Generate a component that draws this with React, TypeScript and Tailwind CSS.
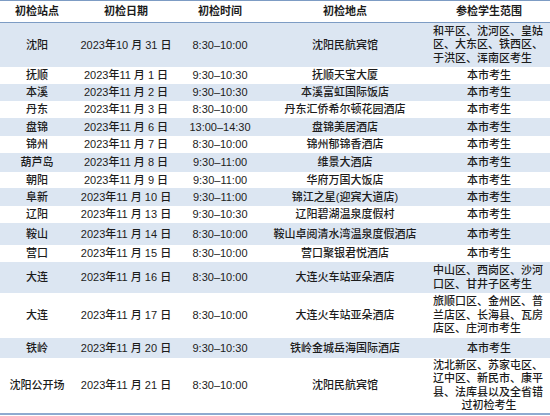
import React from "react";

interface Row {
  site: string;
  date: string;
  time: string;
  place: string;
  scope: string[];
  height: string;
  shaded: boolean;
  lastCentered?: boolean;
}

const rows: Row[] = [
  { site: "沈阳", date: "2023年10 月 31 日", time: "8:30–10:00", place: "沈阳民航宾馆", scope: ["和平区、沈河区、皇姑", "区、大东区、铁西区、", "于洪区、浑南区考生"], height: "h-[44px]", shaded: true },
  { site: "抚顺", date: "2023年11 月 1 日", time: "9:30–10:30", place: "抚顺天宝大厦", scope: ["本市考生"], height: "h-[17px]", shaded: false },
  { site: "本溪", date: "2023年11 月 2 日", time: "9:30–10:30", place: "本溪富虹国际饭店", scope: ["本市考生"], height: "h-[17px]", shaded: true },
  { site: "丹东", date: "2023年11 月 3 日", time: "8:30–10:00", place: "丹东汇侨希尔顿花园酒店", scope: ["本市考生"], height: "h-[17px]", shaded: false },
  { site: "盘锦", date: "2023年11 月 6 日", time: "13:00–14:30", place: "盘锦美居酒店", scope: ["本市考生"], height: "h-[18px]", shaded: true },
  { site: "锦州", date: "2023年11 月 7 日", time: "8:30–10:00", place: "锦州郁锦香酒店", scope: ["本市考生"], height: "h-[17px]", shaded: false },
  { site: "葫芦岛", date: "2023年11 月 8 日", time: "9:30–11:00", place: "维景大酒店", scope: ["本市考生"], height: "h-[19px]", shaded: true },
  { site: "朝阳", date: "2023年11 月 9 日", time: "9:30–11:00", place: "华府万国大饭店", scope: ["本市考生"], height: "h-[16px]", shaded: false },
  { site: "阜新", date: "2023年11 月 10 日", time: "9:30–11:00", place: "锦江之星(迎宾大道店)", scope: ["本市考生"], height: "h-[18px]", shaded: true },
  { site: "辽阳", date: "2023年11 月 13 日", time: "9:30–10:30", place: "辽阳碧湖温泉度假村", scope: ["本市考生"], height: "h-[17px]", shaded: false },
  { site: "鞍山", date: "2023年11 月 14 日", time: "8:30–10:00", place: "鞍山卓阅清水湾温泉度假酒店", scope: ["本市考生"], height: "h-[22px]", shaded: true },
  { site: "营口", date: "2023年11 月 15 日", time: "8:30–10:00", place: "营口聚银君悦酒店", scope: ["本市考生"], height: "h-[17px]", shaded: false },
  { site: "大连", date: "2023年11 月 16 日", time: "8:30–10:00", place: "大连火车站亚朵酒店", scope: ["中山区、西岗区、沙河", "口区、甘井子区考生"], height: "h-[31px]", shaded: true },
  { site: "大连", date: "2023年11 月 17 日", time: "8:30–10:00", place: "大连火车站亚朵酒店", scope: ["旅顺口区、金州区、普", "兰店区、长海县、瓦房", "店区、庄河市考生"], height: "h-[45px]", shaded: false },
  { site: "铁岭", date: "2023年11 月 20 日", time: "9:30–10:30", place: "铁岭金城岳海国际酒店", scope: ["本市考生"], height: "h-[20px]", shaded: true },
  { site: "沈阳公开场", date: "2023年11 月 21 日", time: "8:30–10:00", place: "沈阳民航宾馆", scope: ["沈北新区、苏家屯区、", "辽中区、新民市、康平", "县、法库县以及全省错", "过初检考生"], height: "h-[55px]", shaded: false, lastCentered: true },
];

const cols = "grid grid-cols-[74px_104px_84px_166px_122px]";

const ScopeCell: React.FC<{ lines: string[]; lastCentered?: boolean }> = ({ lines, lastCentered }) => {
  if (lines.length === 1) {
    return <div className="text-center">{lines[0]}</div>;
  }
  return (
    <div className="w-[112px] leading-[13.4px]">
      {lines.map((line, i) => (
        <div
          key={i}
          className={lastCentered && i === lines.length - 1 ? "text-center" : "text-left whitespace-nowrap"}
        >
          {line}
        </div>
      ))}
    </div>
  );
};

export default function App() {
  return (
    <div
      className="w-[550px] h-[416px] bg-white text-[11px] text-[#1c1c1c] font-medium"
      style={{ fontFamily: '"Liberation Sans", "Noto Sans CJK SC", sans-serif' }}
    >
      <div className={`${cols} h-[23px] border-t-[1.5px] border-b border-[#7d9cc4] font-bold items-center`}>
        <div className="text-center">初检站点</div>
        <div className="text-center">初检日期</div>
        <div className="text-center">初检时间</div>
        <div className="text-center">初检地点</div>
        <div className="text-center">参检学生范围</div>
      </div>
      {rows.map((r, i) => (
        <div
          key={i}
          className={`${cols} ${r.height} items-center ${r.shaded ? "bg-[#dce6f2]" : "bg-white"}`}
        >
          <div className="text-center whitespace-nowrap">{r.site}</div>
          <div className="text-center whitespace-nowrap">{r.date}</div>
          <div className="text-center whitespace-nowrap">{r.time}</div>
          <div className="text-center whitespace-nowrap">{r.place}</div>
          <div className="flex justify-center">
            <ScopeCell lines={r.scope} lastCentered={r.lastCentered} />
          </div>
        </div>
      ))}
      <div className="h-[2px] bg-[#8eaad0]" />
    </div>
  );
}
